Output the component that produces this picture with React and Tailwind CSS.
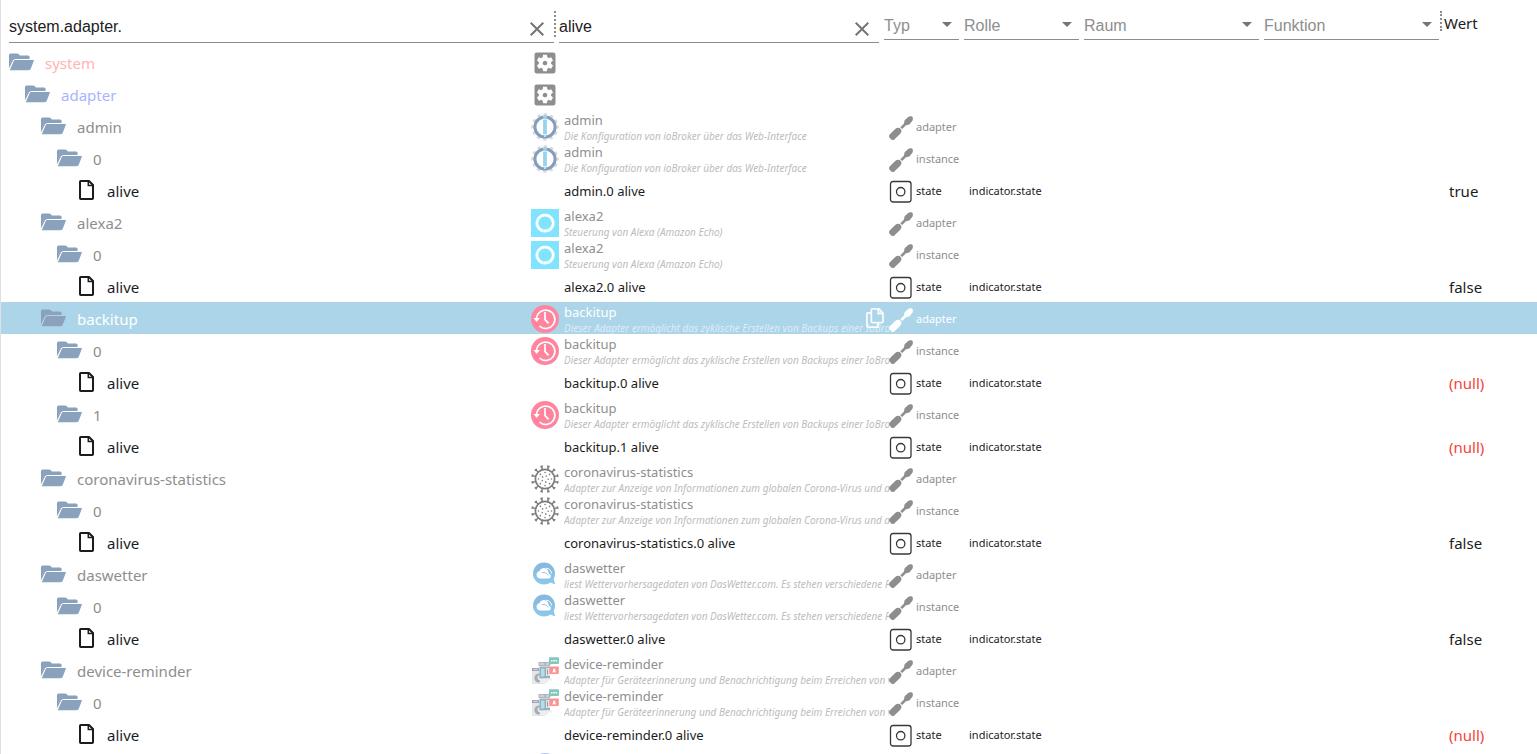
import React, { useState } from 'react';
import { MdClose, MdSettingsApplications } from 'react-icons/md';

const INDENT = ['pl-2', 'pl-6', 'pl-10', 'pl-14', 'pl-18'];

const BACKITUP = 'Dieser Adapter ermöglicht das zyklische Erstellen von Backups einer IoBro…';
const CORONA = 'Adapter zur Anzeige von Informationen zum globalen Corona-Virus und d…';
const WETTER = 'liest Wettervorhersagedaten von DasWetter.com. Es stehen verschiedene Pr…';
const REMINDER = 'Adapter für Geräteerinnerung und Benachrichtigung beim Erreichen von v…';

function adapter(name, icon, desc, values, selected = false) {
  return [
    { level: 2, id: name, name, icon, desc, type: 'adapter', selected },
    ...values.flatMap((value, i) => [
      { level: 3, id: String(i), name, icon, desc, type: 'instance' },
      { level: 4, id: 'alive', name: `${name}.${i} alive`, type: 'state', role: 'indicator.state', value },
    ]),
  ];
}

const ROWS = [
  { level: 0, id: 'system', icon: 'settings', tone: 'text-[#ffb3b3]' },
  { level: 1, id: 'adapter', icon: 'settings', tone: 'text-[#a8b4ff]' },
  ...adapter('admin', 'admin', 'Die Konfiguration von ioBroker über das Web-Interface', ['true']),
  ...adapter('alexa2', 'alexa', 'Steuerung von Alexa (Amazon Echo)', ['false']),
  ...adapter('backitup', 'backup', BACKITUP, ['(null)', '(null)'], true),
  ...adapter('coronavirus-statistics', 'virus', CORONA, ['false']),
  ...adapter('daswetter', 'weather', WETTER, ['false']),
  ...adapter('device-reminder', 'reminder', REMINDER, ['(null)']),
];

function FolderIcon() {
  return (
    <svg width="25" height="18" viewBox="0 0 25 18" fill="#8aa2bc" aria-hidden="true">
      <path d="M0 15.500V2Q0 .5 1.500 .5H8.200Q9 .5 9.600 1.100L11 2.400H19Q20.600 2.400 20.600 4V6H6.500Q4.600 6 3.800 7.500Z" />
      <path d="M.8 17.300 4.600 8.300Q5.200 6.900 6.700 6.900H24.200Q25.200 6.900 24.800 7.900L21.600 16Q21 17.300 19.500 17.300Z" />
    </svg>
  );
}

function FileIcon() {
  return (
    <svg width="16" height="20" viewBox="0 0 16 20" fill="none" stroke="#1c1c1c" strokeWidth="2" aria-hidden="true">
      <path d="M2 1H10L14 5V18.200Q14 19 13.200 19H1.800Q1 19 1 18.200V1.800Q1 1 1.800 1Z" />
      <path d="M9.300 1.500V5.600H13.500" strokeWidth="1.500" />
    </svg>
  );
}

function CopyIcon() {
  return (
    <svg width="18" height="20" viewBox="0 0 18 20" fill="none" stroke="currentColor" strokeWidth="1.800" aria-hidden="true">
      <path d="M6.300 .9H13L17 5V13.800Q17 14.700 16 14.700H6.300Q5.300 14.700 5.300 13.800V1.900Q5.300 .9 6.300 .9Z" />
      <path d="M12.300 1V5.500H17" />
      <path d="M5.300 4.800H1.900Q.9 4.800 .9 5.800V18.100Q.9 19.100 1.900 19.100H11.200Q12.200 19.100 12.200 18.100V15" />
    </svg>
  );
}

function ScrewdriverIcon() {
  return (
    <svg width="24" height="24" viewBox="0 0 24 24" fill="currentColor" aria-hidden="true">
      <path d="M19.500 .8 22.200 0 24 1.800 23.600 4.400 20.300 8.500 17 9.300 13.200 13 11.300 11.200 15 7.400 15.600 4.300Z" />
      <path d="M6.200 12.900Q8.400 11 10.600 12.100L12.100 13.600Q13 15.700 11.300 17.700L5.300 23.400Q3.800 24.600 2.300 23.400L.6 21.700Q-.6 20.200 .6 18.500Z" />
    </svg>
  );
}

function StateIcon() {
  return (
    <svg width="23" height="23" viewBox="0 0 23 23" fill="none" stroke="#383838" aria-hidden="true">
      <rect x="1.500" y="1.500" width="20.500" height="20.500" rx="2.500" strokeWidth="1.300" />
      <circle cx="11.700" cy="11.700" r="4.200" strokeWidth="1.300" />
    </svg>
  );
}

function AdminIcon() {
  return (
    <svg width="28" height="28" viewBox="0 0 28 28" fill="none" aria-hidden="true">
      <circle cx="14" cy="14" r="12.500" stroke="#dadada" strokeWidth="2.600" strokeDasharray="3.200 3.345" strokeDashoffset="1.600" />
      <circle cx="14" cy="14" r="10.100" stroke="#829dbf" strokeWidth="3" fill="#fff" />
      <path d="M12 2.500h4v3.800h-4zM12.100 6.800h3.800v14.400h-3.800z" fill="#99d2ee" />
      <path d="M13 21.800h2V24h-2z" fill="#bfe0f2" />
    </svg>
  );
}

function AlexaIcon() {
  return (
    <svg width="28" height="28" viewBox="0 0 28 28" aria-hidden="true">
      <rect width="28" height="28" fill="#80e4ff" />
      <path d="M12.600 22.100A8.100 8.100 0 1 1 15.500 22.100" fill="none" stroke="#fff" strokeWidth="2.800" />
      <path d="M12.800 20.400Q14.500 21 17 19.700L15 23.500H12.700Z" fill="#fff" />
    </svg>
  );
}

function BackupIcon() {
  return (
    <svg width="28" height="28" viewBox="0 0 28 28" fill="none" aria-hidden="true">
      <circle cx="14" cy="14" r="14" fill="#ff859e" />
      <path d="M5.500 13.500A9.200 9.200 0 1 1 8.400 21" stroke="#fff" strokeWidth="1.700" />
      <path d="M2.600 13H8.800L5.700 17Z" fill="#fff" />
      <path d="M14 7V14.600L17.600 18.300" stroke="#fff" strokeWidth="1.700" />
    </svg>
  );
}

function VirusIcon() {
  const spikes = Array.from({ length: 12 }, (_, i) => i * 30 + 15);
  const outer = Array.from({ length: 8 }, (_, i) => i * 45);
  const inner = Array.from({ length: 5 }, (_, i) => i * 72);
  return (
    <svg width="28" height="28" viewBox="-14 -14 28 28" fill="none" stroke="#7d7d7d" aria-hidden="true">
      <circle r="9.600" strokeWidth="1.700" />
      {spikes.map((a) => (
        <path key={a} d="M0 -9.800V-13M-1.300 -13.100H1.300" strokeWidth="1.500" transform={`rotate(${a})`} />
      ))}
      {outer.map((a) => (
        <circle key={a} cy="-6.500" r=".8" fill="#7d7d7d" stroke="none" transform={`rotate(${a})`} />
      ))}
      {inner.map((a) => (
        <circle key={a} cy="-3.200" r=".8" fill="#7d7d7d" stroke="none" transform={`rotate(${a + 22})`} />
      ))}
    </svg>
  );
}

function WeatherIcon() {
  return (
    <svg width="28" height="28" viewBox="0 0 28 28" aria-hidden="true">
      <defs>
        <linearGradient id="sky" x1="0" y1="0" x2="0" y2="28" gradientUnits="userSpaceOnUse">
          <stop offset="0" stopColor="#85b5dc" />
          <stop offset="1" stopColor="#8dcdf0" />
        </linearGradient>
      </defs>
      <circle cx="13" cy="12.500" r="11" fill="url(#sky)" />
      <path d="M22.500 17Q22.800 20 24.300 22.500Q24 23.500 22.800 23.100L17.500 20.500Z" fill="url(#sky)" />
      <path d="M8.800 17.600A3.800 3.800 0 0 1 8.300 10.200A4.800 4.800 0 0 1 17 9.600L17.800 12.400A2.700 2.700 0 0 1 18 17.600Z" fill="#fff" />
      <path d="M11 11.500Q14.500 10.500 17.500 14.300" stroke="#85c0e5" strokeWidth=".9" fill="none" />
      <path d="M15 7.300Q19.500 7.300 20.600 12.300" stroke="#fff" strokeWidth="1" fill="none" />
    </svg>
  );
}

function ReminderIcon() {
  return (
    <svg width="28" height="28" viewBox="0 0 28 28" aria-hidden="true">
      <path d="M1 11H14V27H1Z" fill="#e3e6e9" />
      <path d="M1 11H8V14H1Z" fill="#9fa8b0" />
      <path d="M2.500 12h4v1h-4z" fill="#d5dade" />
      <circle cx="8" cy="21" r="4.600" fill="#a3abb3" />
      <circle cx="9" cy="20.500" r="2.600" fill="#dfe3e6" />
      <path d="M7.500 5H19V9H7.500Z" fill="#b0b8bf" />
      <path d="M8.500 6.500H13V7.500H8.500ZM15 6.500H18V7.500H15Z" fill="#e3e7ea" />
      <path d="M8.500 9.500H19V21.500H8.500Z" fill="#a3abb3" />
      <path d="M10 11.500H13.500V19.500H10Z" fill="#aee0f5" />
      <path d="M15 11H19V19H15Z" fill="#dce5ea" />
      <path d="M16 12.500H17V17.500H16Z" fill="#939ca5" />
      <path d="M19 .3H26.500Q28 .3 28 1.500V6Q28 7.100 26.500 7.100H20.500L18 8.300V1.500Q18 .3 19 .3Z" fill="#80c8bd" />
      <path d="M20 3h1.500v1.500H20zM22.300 3h1.500v1.500h-1.500zM24.600 3h1.500v1.500h-1.500z" fill="#fff" />
      <rect x="18.300" y="9.500" width="9.500" height="7.500" rx="1" fill="#ff9191" />
      <path d="M21 15.300 22 14.300V12.800Q23.200 10.300 24.400 12.800V14.300L25.400 15.300Z" fill="#fff" />
      <path d="M8.500 21.500H21V23.500H17V26H9Z" fill="#edf0f2" />
    </svg>
  );
}

const ICONS = {
  settings: () => <MdSettingsApplications className="size-7 text-[#8e8e8e]" aria-hidden="true" />,
  admin: AdminIcon,
  alexa: AlexaIcon,
  backup: BackupIcon,
  virus: VirusIcon,
  weather: WeatherIcon,
  reminder: ReminderIcon,
};

function TextFilter({ label, initial }) {
  const [value, setValue] = useState(initial);
  return (
    <div className="flex h-8 flex-1 items-center border-b border-[#8c8c8c] pr-[5px]">
      <input
        aria-label={label}
        className="min-w-0 flex-1 bg-transparent text-base text-[#212121] outline-none"
        value={value}
        onChange={(e) => setValue(e.target.value)}
      />
      <button type="button" aria-label={`${label} löschen`} className="mt-1 text-[#757575]" onClick={() => setValue('')}>
        <MdClose className="size-6" />
      </button>
    </div>
  );
}

function SelectFilter({ label }) {
  return (
    <div className="mr-[5px] grid h-[29px] border-b border-[#8c8c8c]">
      <select
        aria-label={label}
        defaultValue=""
        className="col-start-1 row-start-1 w-full appearance-none bg-transparent pt-0.5 text-base text-[#8e8e8e] outline-none"
      >
        <option value="">{label}</option>
      </select>
      <svg className="pointer-events-none col-start-1 row-start-1 mt-px size-6 justify-self-end" viewBox="0 0 24 24" fill="#757575" aria-hidden="true">
        <path d="M7 10l5 5 5-5z" />
      </svg>
    </div>
  );
}

function Row({ row }) {
  const leaf = row.type === 'state';
  const Icon = ICONS[row.icon];
  const tone = row.selected ? 'text-white' : leaf ? 'text-[#1c1c1c]' : row.tone || 'text-[#8e8e8e]';
  return (
    <tr className={`${row.selected ? 'bg-[#acd5e9]' : ''} ${tone}`}>
      <td className="h-8 p-0">
        <div className={`flex h-8 items-center ${INDENT[row.level]}`}>
          {leaf ? (
            <span className="w-[34px] shrink-0 pb-px pl-1.5">
              <FileIcon />
            </span>
          ) : (
            <button type="button" aria-label={`${row.id} zuklappen`} className="w-9 shrink-0">
              <FolderIcon />
            </button>
          )}
          <span className="flex-1 truncate pt-0.5 text-[15px] leading-6">{row.id}</span>
          {Icon && (
            <span className="shrink-0 pt-0.5">
              <Icon />
            </span>
          )}
        </div>
      </td>
      <td className="h-8 p-0 pl-[5px]">
        {leaf && <div className="truncate pt-px text-[13px] leading-5">{row.name}</div>}
        {!leaf && row.name && (
          <div className="relative -mr-[5px] h-8 overflow-x-clip whitespace-nowrap">
            <div className="text-[13px] leading-5">{row.name}</div>
            <div className={`text-[10px] leading-3 italic ${row.selected ? 'text-white/60' : 'text-[#bcbcbc]'}`}>{row.desc}</div>
            {row.selected && (
              <button type="button" aria-label="Kopieren" className="absolute top-1.5 right-[5px] text-white/90">
                <CopyIcon />
              </button>
            )}
          </div>
        )}
      </td>
      <td className="h-8 p-0 pl-[5px]">
        {row.type && (
          <div className="flex items-center gap-1 text-[11px] leading-4 whitespace-nowrap">
            <span className="w-[23px] shrink-0 pt-[3px]">{leaf ? <StateIcon /> : <ScrewdriverIcon />}</span>
            <span className="pt-0.5">{row.type}</span>
          </div>
        )}
      </td>
      <td className="h-8 p-0 pt-0.5 pl-[5px] text-[11px] leading-4">{row.role}</td>
      <td className="p-0" />
      <td className="p-0" />
      <td className={`h-8 p-0 pt-0.5 pl-[5px] text-[15px] leading-6 ${row.value === '(null)' ? 'text-[#f44336]' : ''}`}>{row.value}</td>
    </tr>
  );
}

export default function App() {
  return (
    <main className="h-screen overflow-hidden border-l border-[#e0e0e0] bg-white font-['Segoe_UI','Noto_Sans',sans-serif]">
      <table className="w-full table-fixed border-collapse text-left">
        <colgroup>
          <col />
          <col className="w-[325px]" />
          <col className="w-20" />
          <col className="w-[120px]" />
          <col className="w-[180px]" />
          <col className="w-[180px]" />
          <col className="w-[93px]" />
        </colgroup>
        <thead className="font-['Liberation_Sans',sans-serif]">
          <tr className="h-[46px] align-top font-normal">
            <th className="p-0 pt-[11px] pl-2 font-normal">
              <div className="flex">
                <TextFilter label="ID" initial="system.adapter." />
                <span className="mr-[3px] h-[26px] border-l-2 border-dotted border-[#8c8c8c]" />
              </div>
            </th>
            <th className="p-0 pt-[11px] pr-[5px] font-normal">
              <div className="flex">
                <TextFilter label="Name" initial="alive" />
              </div>
            </th>
            {['Typ', 'Rolle', 'Raum', 'Funktion'].map((label) => (
              <th key={label} className="p-0 pt-[11px] font-normal">
                <SelectFilter label={label} />
              </th>
            ))}
            <th className="p-0 pt-[11px] font-['Segoe_UI','Noto_Sans',sans-serif] text-[15px] leading-6 font-normal text-[#212121]">
              <div className="-ml-1 flex items-start gap-0.5">
                <span className="h-5 border-l-2 border-dotted border-[#8c8c8c]" />
                Wert
              </div>
            </th>
          </tr>
        </thead>
        <tbody>
          {ROWS.map((row, i) => (
            <Row key={i} row={row} />
          ))}
          <tr>
            <td className="h-8 p-0">
              <div className="flex h-8 justify-end pt-[3px]">
                <svg width="28" height="28" viewBox="0 0 28 28" aria-hidden="true">
                  <circle cx="14" cy="14" r="14" fill="#a9c1f5" />
                </svg>
              </div>
            </td>
          </tr>
        </tbody>
      </table>
    </main>
  );
}
